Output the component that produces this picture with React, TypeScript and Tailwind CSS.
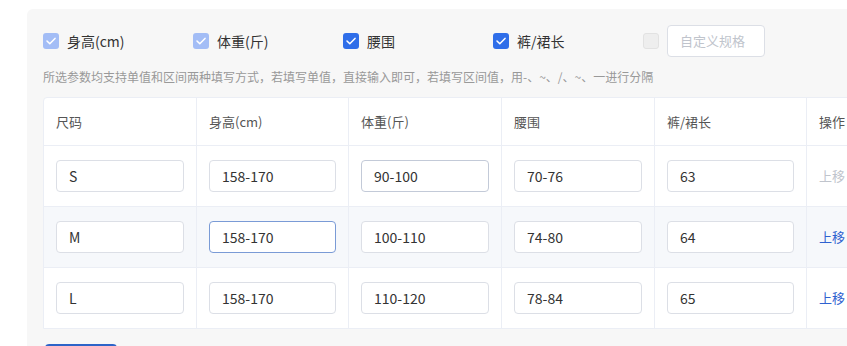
import React from "react";

const font = { fontFamily: '"Noto Sans CJK SC", "Noto Sans", sans-serif' };

const specs = [
  { label: "身高(cm)", checked: true, disabled: true },
  { label: "体重(斤)", checked: true, disabled: true },
  { label: "腰围", checked: true, disabled: false },
  { label: "裤/裙长", checked: true, disabled: false },
];

const rows = [
  { size: "S", height: "158-170", weight: "90-100", waist: "70-76", length: "63" },
  { size: "M", height: "158-170", weight: "100-110", waist: "74-80", length: "64" },
  { size: "L", height: "158-170", weight: "110-120", waist: "78-84", length: "65" },
];

const Check = ({ checked, disabled }: { checked: boolean; disabled: boolean }) => {
  if (!checked) {
    return <span className="w-4 h-4 rounded-[3px] border border-[#e2e2e2] bg-[#eeeeee] shrink-0" />;
  }
  return (
    <span
      className={`w-4 h-4 rounded-[3px] flex items-center justify-center shrink-0 ${
        disabled ? "bg-[#a3bdf6]" : "bg-[#2f6ee9]"
      }`}>
      <svg width="10" height="8" viewBox="0 0 10 8" fill="none">
        <path d="M1 4l2.8 2.8L9 1.4" stroke="white" strokeWidth="1.5" strokeLinecap="round" strokeLinejoin="round" />
      </svg>
    </span>
  );
};

const Cell = ({ value, state }: { value: string; state?: "focus" | "hover" }) => {
  const border =
    state === "focus" ? "border-[#7a9bd6]" : state === "hover" ? "border-[#c3cad8]" : "border-[#dcdfe6]";
  return (
    <div
      className={`w-[128px] h-[32px] rounded-[4px] border bg-white flex items-center px-3 text-[14px] text-[#333] ${border}`}>
      {value}
    </div>
  );
};

export default function App() {
  return (
    <div className="w-[847px] h-[346px] bg-white overflow-hidden pt-[9px] pl-[27px]" style={font}>
      <div className="w-[900px] h-[400px] bg-[#f7f7f7] rounded-tl-[6px] pl-4 pt-4">
        <div className="flex items-center h-[32px]">
          {specs.map((s) => (
            <label key={s.label} className="w-[150px] flex items-center gap-[8px] text-[14px] text-[#333]">
              <Check checked={s.checked} disabled={s.disabled} />
              <span>{s.label}</span>
            </label>
          ))}
          <div className="flex items-center gap-2">
            <Check checked={false} disabled={false} />
            <div className="w-[98px] h-[32px] rounded-[4px] border border-[#dcdfe6] bg-white flex items-center px-3 text-[13px] text-[#c0c4cc]">
              自定义规格
            </div>
          </div>
        </div>
        <p className="mt-[11px] text-[12px] leading-[18px] text-[#999]">
          所选参数均支持单值和区间两种填写方式，若填写单值，直接输入即可，若填写区间值，用-、~、/、~、一进行分隔
        </p>
        <div className="mt-[11px] w-[860px] bg-white border border-[#ebeef5] rounded-tl-[4px]">
          <div className="grid grid-cols-[153px_152px_153px_153px_152px_1fr] h-[47px] text-[13px] text-[#555]">
            {["尺码", "身高(cm)", "体重(斤)", "腰围", "裤/裙长", "操作"].map((h, i) => (
              <div key={h} className={`flex items-center px-3 ${i < 5 ? "border-r border-[#ebeef5]" : ""}`}>
                {h}
              </div>
            ))}
          </div>
          {rows.map((r, ri) => (
            <div
              key={r.size}
              className={`grid grid-cols-[153px_152px_153px_153px_152px_1fr] h-[61px] border-t border-[#ebeef5] ${
                ri === 1 ? "bg-[#f6f8fb]" : ""
              }`}>
              {[r.size, r.height, r.weight, r.waist, r.length].map((v, ci) => (
                <div key={ci} className="flex items-center px-3 border-r border-[#ebeef5]">
                  <Cell
                    value={v}
                    state={ri === 1 && ci === 1 ? "focus" : ri === 0 && ci === 2 ? "hover" : undefined}
                  />
                </div>
              ))}
              <div className={`flex items-center px-3 text-[13px] ${ri === 0 ? "text-[#c0c4cc]" : "text-[#2f62d0]"}`}>
                上移
              </div>
            </div>
          ))}
        </div>
        <div className="mt-[15px] ml-[2px] w-[72px] h-[30px] rounded-[4px] bg-[#2d64c8]" />
      </div>
    </div>
  );
}
